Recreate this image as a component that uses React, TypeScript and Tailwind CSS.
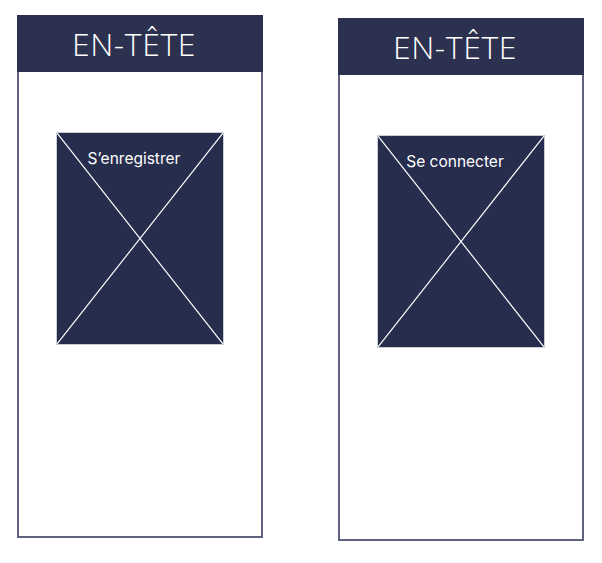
const screens = [
  { label: "S’enregistrer", top: 'mt-[15px]' },
  { label: 'Se connecter', top: 'mt-[18px]' },
];

function Placeholder({ label }: { label: string }) {
  return (
    <div className="relative w-[168px] h-[213px] bg-[#272d4d] border border-[#c9cbd6]">
      <svg className="absolute inset-0 w-full h-full" viewBox="0 0 168 213" preserveAspectRatio="none">
        <line x1="0" y1="0" x2="168" y2="213" stroke="#ffffff" strokeWidth="1.2" />
        <line x1="168" y1="0" x2="0" y2="213" stroke="#ffffff" strokeWidth="1.2" />
      </svg>
      <p className="relative pt-[17px] pr-[12px] text-center text-[15.5px] leading-[18px] text-white font-['Inter',sans-serif]">
        {label}
      </p>
    </div>
  );
}

export default function App() {
  return (
    <div className="w-[602px] h-[563px] bg-white flex items-start pl-[17px] gap-[75px]">
      {screens.map((s) => (
        <div key={s.label} className={`${s.top} w-[246px] h-[523px] flex flex-col`}>
          <div className="h-[57px] bg-[#2c3150] flex items-center justify-center pr-[12px]">
            <span className="text-white text-[32px] font-light font-['Open_Sans',sans-serif] tracking-[0.6px]">EN-TÊTE</span>
          </div>
          <div className="flex-1 border-x-2 border-b-2 border-[#5f6380] flex justify-center pt-[60px]">
            <Placeholder label={s.label} />
          </div>
        </div>
      ))}
    </div>
  );
}
